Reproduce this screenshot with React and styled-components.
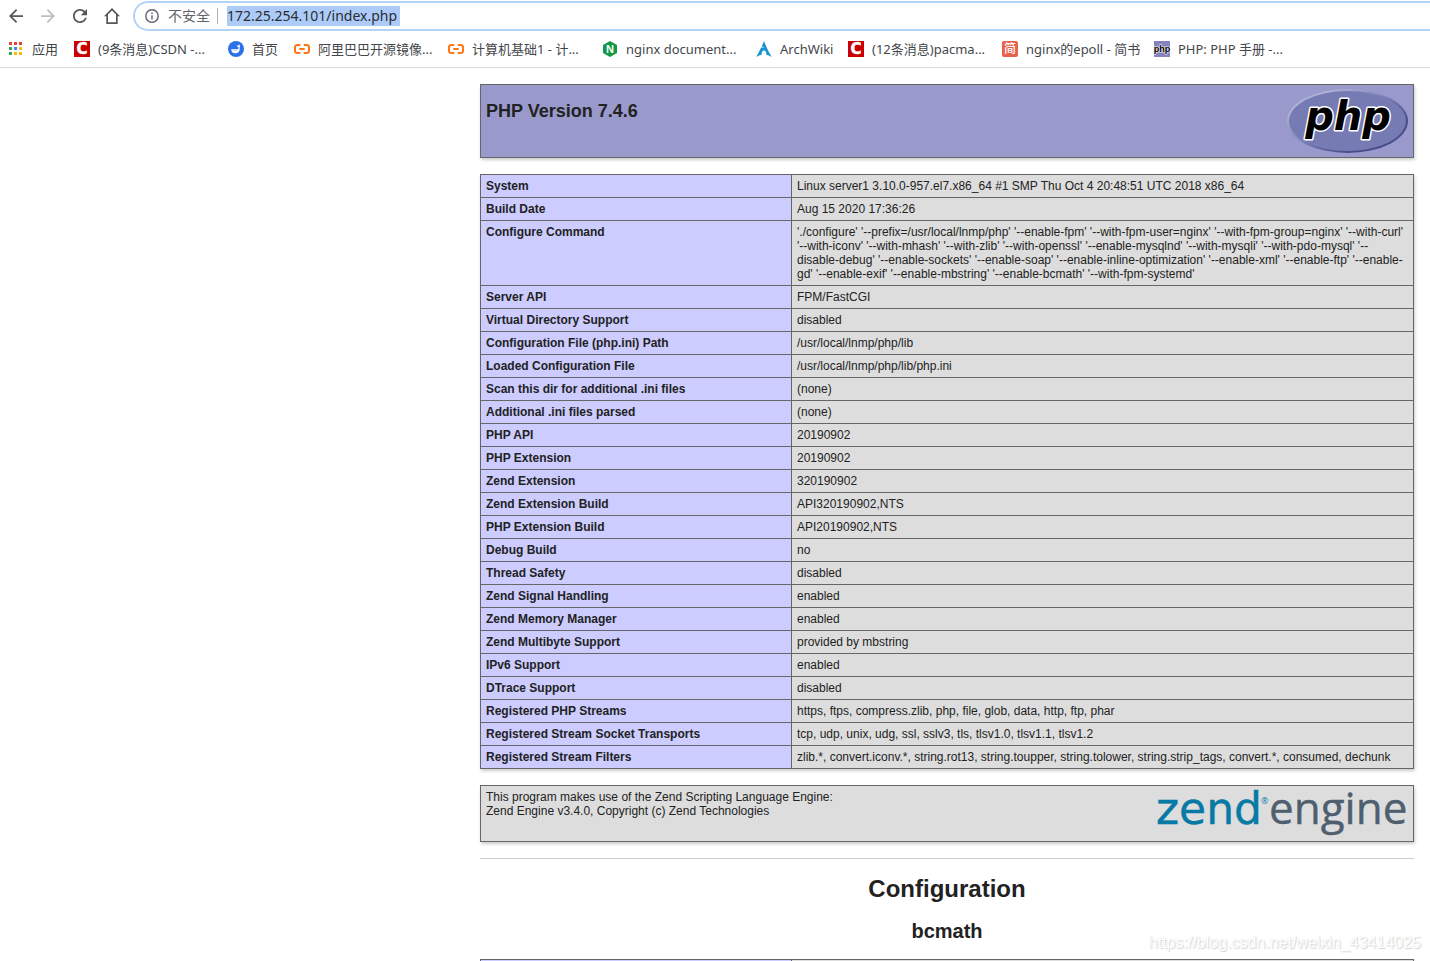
import React from 'react';
import styled, { createGlobalStyle } from 'styled-components';

const UI_FONT = '"Noto Sans", "Noto Sans CJK SC", sans-serif';
const DOC_FONT = '"Liberation Sans", Arial, sans-serif';

const GlobalStyle = createGlobalStyle`
  * { box-sizing: border-box; }
  body { margin: 0; background: #fff; color: #222; font-family: ${DOC_FONT}; }
  svg { overflow: visible; }
`;

const Page = styled.div`
  height: 100vh;
  overflow: hidden;
  position: relative;
`;

const Chrome = styled.header`
  border-bottom: 1px solid #dadce0;
  font-family: ${UI_FONT};
`;

const Toolbar = styled.div`
  display: flex;
  align-items: center;
  height: 32px;
  padding-left: 8px;
`;

const NavButton = styled.button`
  display: flex;
  align-items: center;
  justify-content: center;
  width: 16px;
  height: 16px;
  margin-right: 16px;
  padding: 0;
  border: 0;
  background: none;
  color: ${(p) => (p.disabled ? '#bcbec1' : '#54575b')};
  svg { display: block; fill: currentColor; }
`;

const AddressBar = styled.label`
  display: flex;
  flex: 1;
  align-items: center;
  height: 30px;
  margin-left: -3px;
  padding-left: 10px;
  border: 2px solid #b5d4f4;
  border-right: 0;
  border-radius: 15px 0 0 15px;
  font-size: 14px;
  color: #5f6368;
`;

const Security = styled.span`
  margin: 0 7px 0 9px;
  line-height: 20px;
`;

const Divider = styled.span`
  width: 1px;
  height: 16px;
  margin-right: 9px;
  background: #b0b2b5;
`;

const Address = styled.input`
  width: 173px;
  height: 20px;
  padding: 0;
  border: 0;
  outline: 0;
  background: #accbf8;
  color: #2a2d31;
  font: 14px/20px ${UI_FONT};
`;

const Bookmarks = styled.nav`
  display: flex;
  align-items: center;
  gap: 16px;
  height: 35px;
  padding: 0 0 2px 8px;
`;

const Bookmark = styled.a`
  display: flex;
  flex: none;
  align-items: center;
  gap: 8px;
  font-size: 13px;
  line-height: 20px;
  color: #44474b;
  text-decoration: none;
  white-space: nowrap;
  svg { flex: none; display: block; }
`;

const BookmarkLabel = styled.span`
  width: ${(p) => p.$width}px;
`;

const Center = styled.main`
  display: flex;
  flex-direction: column;
  width: 934px;
  max-width: 100%;
  margin: 16px 16px 0 auto;
`;

const InfoTable = styled.table`
  width: 100%;
  margin-bottom: 16px;
  border-collapse: collapse;
  box-shadow: 1px 2px 3px #ccc;
  font-size: 12px;
  line-height: 14px;
`;

const Name = styled.th`
  width: 311px;
  padding: 4px 5px;
  border: 1px solid #666;
  background: #ccf;
  text-align: left;
  vertical-align: baseline;
`;

const Value = styled.td`
  padding: 4px 5px;
  border: 1px solid #666;
  background: #ddd;
  vertical-align: baseline;
`;

const Banner = styled.td`
  padding: 4px 5px;
  border: 1px solid #666;
  background: ${(p) => (p.$header ? '#99c' : '#ddd')};
`;

const BannerBody = styled.div`
  display: flex;
  justify-content: space-between;
  align-items: flex-start;
  svg { display: block; }
`;

const Version = styled.h1`
  margin: 12px 0;
  font-size: 18px;
  line-height: 20px;
`;

const Credit = styled.p`
  margin: 0;
`;

const Rule = styled.hr`
  width: 100%;
  height: 1px;
  margin: 0;
  border: 0;
  background: #ccc;
`;

const SectionTitle = styled.h1`
  margin: 16px 0;
  font-size: 24px;
  line-height: 28px;
  text-align: center;
`;

const ModuleTitle = styled.h2`
  margin: 0 0 16px;
  font-size: 20px;
  line-height: 24px;
  text-align: center;
`;

const Watermark = styled.span`
  position: absolute;
  right: 9px;
  bottom: 8px;
  font-size: 16px;
  line-height: 20px;
  color: #fff;
  text-shadow: 1px 1px 1px #d4d4d4, 0 0 1px #ddd;
`;

const AppsIcon = () => (
  <svg width="16" height="16">
    {['#ea4335', '#ea4335', '#ea4335', '#34a853', '#4285f4', '#fbbc04', '#34a853', '#fbbc04', '#fbbc04'].map((c, i) => (
      <rect key={i} x={1 + (i % 3) * 5} y={1 + Math.floor(i / 3) * 5} width="3" height="3" fill={c} />
    ))}
  </svg>
);

const CsdnIcon = () => (
  <svg width="16" height="16">
    <rect width="16" height="16" fill="#c90000" />
    <text x="8" y="13" textAnchor="middle" fill="#fff" stroke="#fff" strokeWidth="0.5" fontFamily="DejaVu Sans" fontWeight="bold" fontSize="15">C</text>
  </svg>
);

const HomeSiteIcon = () => (
  <svg width="16" height="16">
    <circle cx="8" cy="8" r="8" fill="#2b72ea" />
    <path d="M3.200 8.200h7.200V4.600q0-1.200 1.300-1.200v5.400a4.300 4.300 0 0 1-8.500-.6z" fill="#fff" />
    <path d="M9 4.500h2.700v1.200H9z" fill="#fff" />
    <path d="M3.200 8.200h7.200q-1 2-3.600 2t-3.600-2z" fill="#cfe0fc" />
  </svg>
);

const AliyunIcon = () => (
  <svg width="16" height="16" fill="none" stroke="#ff7519" strokeWidth="2">
    <path d="M6.3 4H3.5Q1 4 1 6.3v3.4Q1 12 3.5 12h2.8M9.7 4h2.8Q15 4 15 6.3v3.4q0 2.3-2.5 2.3H9.7M5.3 8h5.4" />
  </svg>
);

const NginxIcon = () => (
  <svg width="16" height="16">
    <path d="M8 0l7 4v8l-7 4-7-4V4z" fill="#109a46" />
    <text x="8" y="12" textAnchor="middle" fill="#fff" fontFamily="Liberation Sans" fontWeight="bold" fontSize="11">N</text>
  </svg>
);

const ArchIcon = () => (
  <svg width="16" height="16">
    <path d="M8 0c-.8 2-1.3 3.200-2.100 5L8 7 5.200 6.200C3.800 9.300 2.200 12.500.3 16c2-1.200 3.800-2 5.400-2.300-.2-2.400.7-4.200 2.300-4.200s2.500 1.800 2.300 4.200c1.600.3 3.400 1.100 5.400 2.300C12.400 10.200 9.700 4.900 8 0z" fill="#1793d1" />
  </svg>
);

const JianshuIcon = () => (
  <svg width="16" height="16">
    <rect width="16" height="16" rx="2" fill="#e8614c" />
    <text x="8" y="12" textAnchor="middle" fill="#fff" fontFamily="Noto Sans CJK SC" fontWeight="500" fontSize="12">简</text>
  </svg>
);

const PhpIcon = () => (
  <svg width="16" height="16">
    <rect width="16" height="16" fill="#8483bd" />
    <text x="8" y="11" textAnchor="middle" fill="#000" stroke="#fff" strokeWidth="1" paintOrder="stroke" fontFamily="Liberation Sans" fontWeight="bold" fontSize="9">php</text>
  </svg>
);

const PhpLogo = () => (
  <svg width="121" height="64" role="img" aria-label="PHP logo">
    <defs>
      <linearGradient id="rim" x1="0" y1="0" x2="1" y2="1">
        <stop offset="0.2" stopColor="#aeb2d5" />
        <stop offset="0.5" stopColor="#777bb3" />
        <stop offset="0.75" stopColor="#484c89" />
      </linearGradient>
    </defs>
    <ellipse cx="60.500" cy="32" rx="60.500" ry="32" fill="url(#rim)" />
    <ellipse cx="60.500" cy="32" rx="58.500" ry="30" fill="#777bb3" />
    <text x="61" y="41" textAnchor="middle" fill="#000" stroke="#fff" strokeWidth="3" strokeLinejoin="round" paintOrder="stroke" fontFamily="DejaVu Sans" fontWeight="bold" fontStyle="oblique" fontSize="40">php</text>
  </svg>
);

const ZendLogo = () => (
  <svg width="251" height="47" role="img" aria-label="Zend logo">
    <text x="-1" y="34" fill="#0679a5" stroke="#0679a5" strokeWidth="0.4" fontFamily="DejaVu Sans" fontSize="44">zend</text>
    <text x="104" y="14" fill="#0679a5" fontFamily="Open Sans" fontSize="9">®</text>
    <text x="112" y="34" fill="#4f5f70" stroke="#4f5f70" strokeWidth="0.4" fontFamily="Open Sans" fontSize="44">engine</text>
  </svg>
);

const ELIDED = 114;

const BOOKMARKS = [
  [AppsIcon, '应用', 26],
  [CsdnIcon, '(9条消息)CSDN -...', ELIDED],
  [HomeSiteIcon, '首页', 26],
  [AliyunIcon, '阿里巴巴开源镜像...', ELIDED],
  [AliyunIcon, '计算机基础1 - 计...', ELIDED],
  [NginxIcon, 'nginx document...', ELIDED],
  [ArchIcon, 'ArchWiki', 52],
  [CsdnIcon, '(12条消息)pacma...', ELIDED],
  [JianshuIcon, 'nginx的epoll - 简书', 112],
  [PhpIcon, 'PHP: PHP 手册 -...', ELIDED],
];

const ROWS = [
  ['System', 'Linux server1 3.10.0-957.el7.x86_64 #1 SMP Thu Oct 4 20:48:51 UTC 2018 x86_64'],
  ['Build Date', 'Aug 15 2020 17:36:26'],
  ['Configure Command', "'./configure' '--prefix=/usr/local/lnmp/php' '--enable-fpm' '--with-fpm-user=nginx' '--with-fpm-group=nginx' '--with-curl' '--with-iconv' '--with-mhash' '--with-zlib' '--with-openssl' '--enable-mysqlnd' '--with-mysqli' '--with-pdo-mysql' '--disable-debug' '--enable-sockets' '--enable-soap' '--enable-inline-optimization' '--enable-xml' '--enable-ftp' '--enable-gd' '--enable-exif' '--enable-mbstring' '--enable-bcmath' '--with-fpm-systemd'"],
  ['Server API', 'FPM/FastCGI'],
  ['Virtual Directory Support', 'disabled'],
  ['Configuration File (php.ini) Path', '/usr/local/lnmp/php/lib'],
  ['Loaded Configuration File', '/usr/local/lnmp/php/lib/php.ini'],
  ['Scan this dir for additional .ini files', '(none)'],
  ['Additional .ini files parsed', '(none)'],
  ['PHP API', '20190902'],
  ['PHP Extension', '20190902'],
  ['Zend Extension', '320190902'],
  ['Zend Extension Build', 'API320190902,NTS'],
  ['PHP Extension Build', 'API20190902,NTS'],
  ['Debug Build', 'no'],
  ['Thread Safety', 'disabled'],
  ['Zend Signal Handling', 'enabled'],
  ['Zend Memory Manager', 'enabled'],
  ['Zend Multibyte Support', 'provided by mbstring'],
  ['IPv6 Support', 'enabled'],
  ['DTrace Support', 'disabled'],
  ['Registered PHP Streams', 'https, ftps, compress.zlib, php, file, glob, data, http, ftp, phar'],
  ['Registered Stream Socket Transports', 'tcp, udp, unix, udg, ssl, sslv3, tls, tlsv1.0, tlsv1.1, tlsv1.2'],
  ['Registered Stream Filters', 'zlib.*, convert.iconv.*, string.rot13, string.toupper, string.tolower, string.strip_tags, convert.*, consumed, dechunk'],
];

const ARROW = 'M20 11H7.830l5.590-5.590L12 4l-8 8 8 8 1.410-1.410L7.830 13H20z';

export default function App() {
  return (
    <Page>
      <GlobalStyle />
      <Chrome>
        <Toolbar>
          <NavButton aria-label="Back">
            <svg width="14" height="14" viewBox="4 4 16 16"><path d={ARROW} /></svg>
          </NavButton>
          <NavButton aria-label="Forward" disabled>
            <svg width="14" height="14" viewBox="4 4 16 16"><path d={ARROW} transform="rotate(180 12 12)" /></svg>
          </NavButton>
          <NavButton aria-label="Reload">
            <svg width="14" height="14" viewBox="4 4 16 16">
              <path d="M17.65 6.35C16.2 4.9 14.21 4 12 4c-4.42 0-7.99 3.58-7.99 8s3.57 8 7.99 8c3.73 0 6.84-2.55 7.73-6h-2.08c-.82 2.33-3.04 4-5.65 4-3.31 0-6-2.69-6-6s2.69-6 6-6c1.66 0 3.14.69 4.22 1.78L13 11h7V4l-2.35 2.35z" />
            </svg>
          </NavButton>
          <NavButton aria-label="Home">
            <svg width="16" height="16" viewBox="0 0 16 16">
              <path fillRule="evenodd" d="M8 0L0 8.200h2.300V16h11.400V8.200H16zM8 2.500l4 4.100v7.700H4V6.600z" />
            </svg>
          </NavButton>
          <AddressBar>
            <svg width="14" height="14" viewBox="0 0 14 14" fill="#5f6368">
              <circle cx="7" cy="7" r="6.200" fill="none" stroke="#5f6368" strokeWidth="1.400" />
              <path d="M6.300 6.200h1.400v4.300H6.300zM6.300 3.500h1.400v1.400H6.300z" />
            </svg>
            <Security>不安全</Security>
            <Divider />
            <Address aria-label="Address" defaultValue="172.25.254.101/index.php" />
          </AddressBar>
        </Toolbar>
        <Bookmarks>
          {BOOKMARKS.map(([Icon, label, width]) => (
            <Bookmark key={label} href="#">
              <Icon />
              <BookmarkLabel $width={width}>{label}</BookmarkLabel>
            </Bookmark>
          ))}
        </Bookmarks>
      </Chrome>
      <Center>
        <InfoTable>
          <tbody>
            <tr>
              <Banner $header>
                <BannerBody>
                  <Version>PHP Version 7.4.6</Version>
                  <PhpLogo />
                </BannerBody>
              </Banner>
            </tr>
          </tbody>
        </InfoTable>
        <InfoTable>
          <tbody>
            {ROWS.map(([name, value]) => (
              <tr key={name}>
                <Name scope="row">{name}</Name>
                <Value>{value}</Value>
              </tr>
            ))}
          </tbody>
        </InfoTable>
        <InfoTable>
          <tbody>
            <tr>
              <Banner>
                <BannerBody>
                  <Credit>
                    This program makes use of the Zend Scripting Language Engine:
                    <br />
                    Zend Engine v3.4.0, Copyright (c) Zend Technologies
                  </Credit>
                  <ZendLogo />
                </BannerBody>
              </Banner>
            </tr>
          </tbody>
        </InfoTable>
        <Rule />
        <SectionTitle>Configuration</SectionTitle>
        <ModuleTitle>bcmath</ModuleTitle>
        <InfoTable>
          <tbody>
            <tr>
              <Name scope="row" />
              <Value />
            </tr>
          </tbody>
        </InfoTable>
      </Center>
      <Watermark>https://blog.csdn.net/weixin_43414025</Watermark>
    </Page>
  );
}
